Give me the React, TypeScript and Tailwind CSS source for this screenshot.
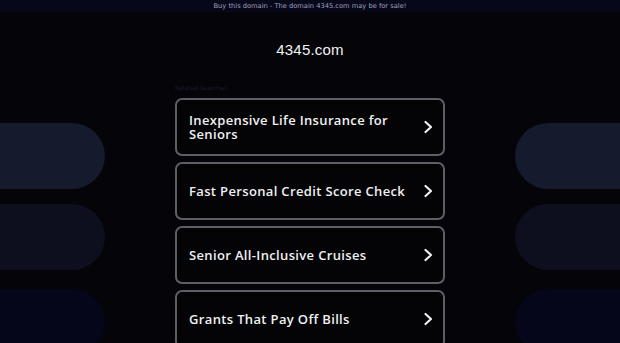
import React from 'react';

const SEARCHES = [
  'Inexpensive Life Insurance for Seniors',
  'Fast Personal Credit Score Check',
  'Senior All-Inclusive Cruises',
  'Grants That Pay Off Bills',
];

const PILLS = ['bg-[#161a2d]', 'bg-[#0d0f1f]', 'bg-[#05061a]'];
const PILL_TOPS = ['top-[123px]', 'top-[204px]', 'top-[289px]'];

function Chevron() {
  return (
    <svg width="14" height="16" viewBox="0 0 14 16" fill="none" stroke="currentColor" strokeWidth="2.2" strokeLinecap="round" strokeLinejoin="round">
      <path d="M4.5 3l5.5 5-5.5 5" />
    </svg>
  );
}

export default function App() {
  return (
    <div className="relative w-[620px] h-[343px] overflow-hidden bg-[#040409] text-white" style={{ fontFamily: '"Open Sans", sans-serif' }}>
      {/* side decorations */}
      {PILLS.map((c, i) => (
        <div key={'l' + i} className={`absolute left-[-40px] w-[145px] h-[66px] rounded-r-[33px] ${c} ${PILL_TOPS[i]}`} />
      ))}
      {PILLS.map((c, i) => (
        <div key={'r' + i} className={`absolute left-[515px] w-[145px] h-[66px] rounded-l-[33px] ${c} ${PILL_TOPS[i]}`} />
      ))}

      <div className="relative flex flex-col items-center">
        <div className="w-full h-[12px] bg-[#07071a] flex items-center justify-center text-[6.7px] text-[#a0a0b8] font-['DejaVu_Sans',sans-serif]">
          Buy this domain - The domain 4345.com may be for sale!
        </div>

        <div className="mt-[29px] text-[15px] leading-[18px] font-['Liberation_Sans',Arial,sans-serif] text-[#f2f2f2] tracking-[0.2px]">
          4345.com
        </div>

        <div className="w-[270px] mt-[25px]">
          <div className="text-[6px] leading-[8px] text-[#1c1c30] font-['DejaVu_Sans',sans-serif]">Related Searches</div>
          <div className="mt-[6px] flex flex-col gap-[6px]">
            {SEARCHES.map((s) => (
              <div key={s} className="h-[58px] border-2 border-[#5e5e66] rounded-[7px] bg-[#040407] flex items-center justify-between pl-3 pr-[8px]">
                <span className="max-w-[222px] text-[13px] leading-[14px] font-semibold tracking-[0.35px] text-[#f0f0f0]">{s}</span>
                <span className="text-[#f0f0f0] shrink-0"><Chevron /></span>
              </div>
            ))}
          </div>
        </div>
      </div>
    </div>
  );
}
